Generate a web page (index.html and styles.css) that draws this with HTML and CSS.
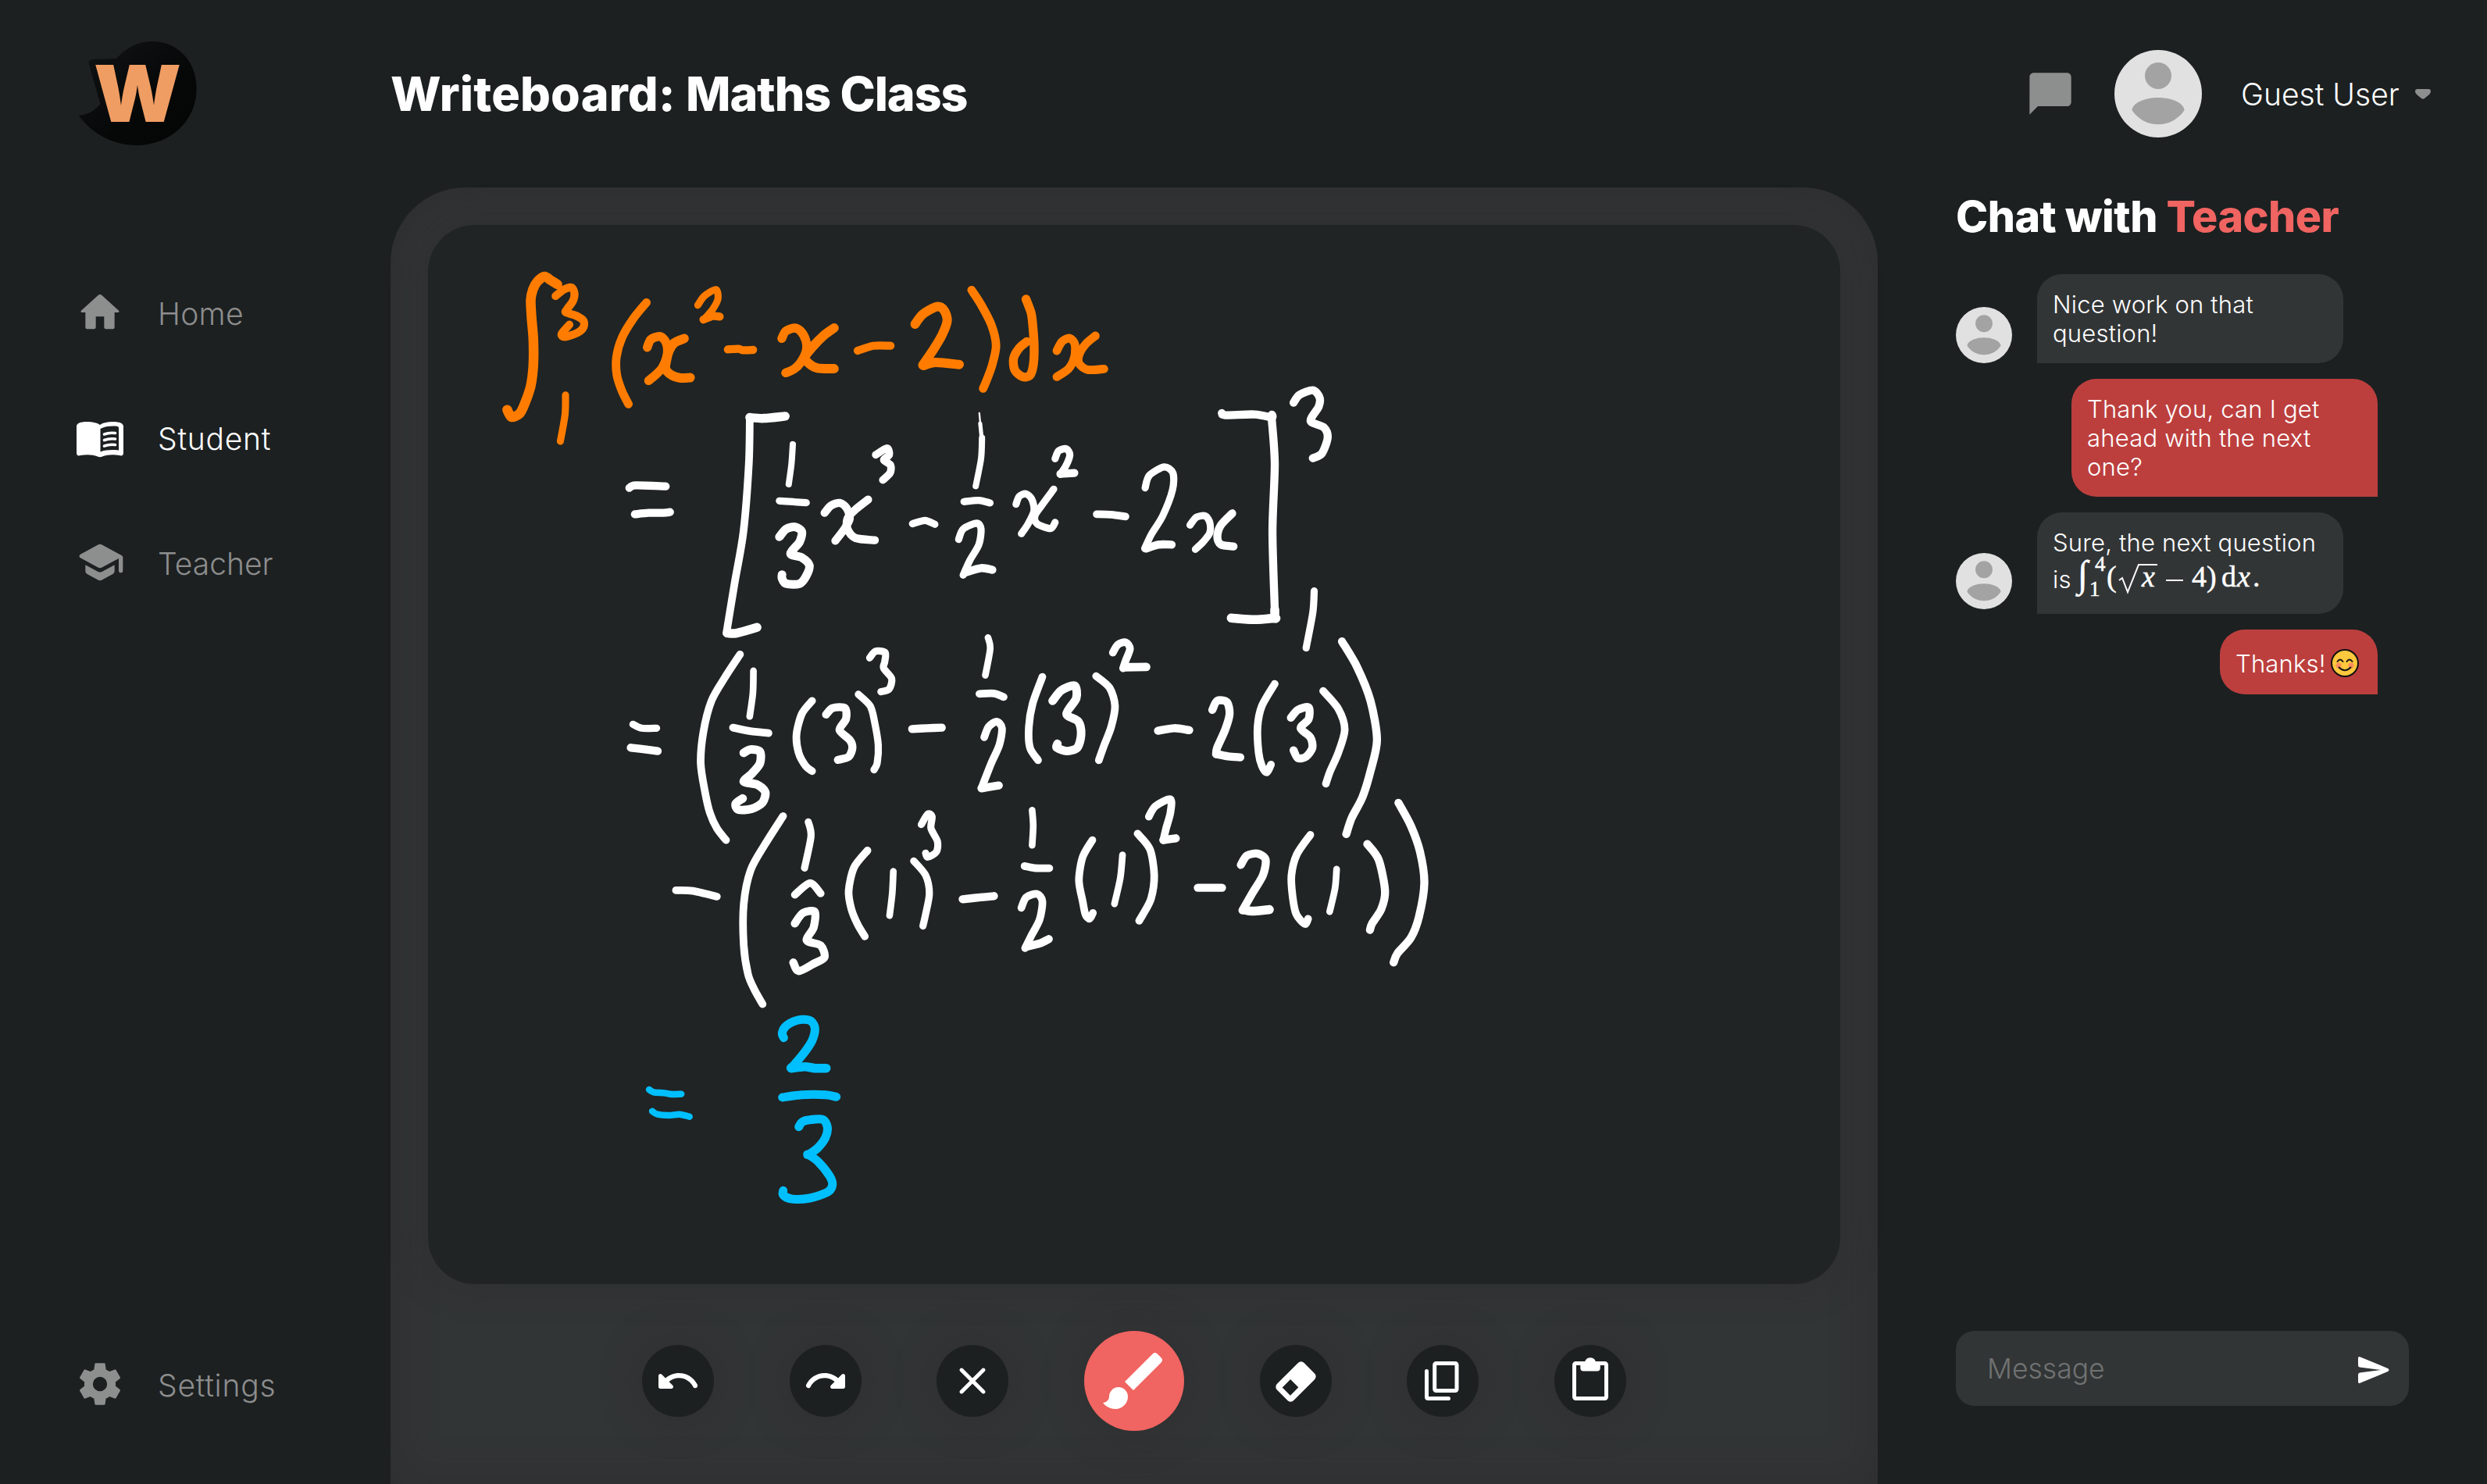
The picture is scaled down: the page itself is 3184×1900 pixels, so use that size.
FILE: index.html
```html
<!DOCTYPE html>
<html lang="en">
<head>
<meta charset="utf-8">
<title>Writeboard: Maths Class</title>
<link rel="stylesheet" href="styles.css">
</head>
<body>
<svg class="sprite" aria-hidden="true">
  <symbol id="avatar" viewBox="0 0 112 112">
    <circle cx="56" cy="56" r="56" fill="#e1e1e1"/>
    <circle cx="56" cy="33" r="17" fill="#a3a3a3"/>
    <path fill="#a3a3a3" d="M22.4 77C24 66 42 61 56 61s32 5 33.6 16a40 40 0 0 1-67.2 0z"/>
  </symbol>
</svg>
<div class="app">
  <aside class="sidebar">
    <svg class="logo" viewBox="0 0 160 140" role="img" aria-label="Writeboard">
      <defs><linearGradient id="ink" x1="0" y1="0" x2="1" y2="1"><stop offset="0" stop-color="#111415"/><stop offset=".6" stop-color="#060808"/><stop offset="1" stop-color="#040505"/></linearGradient></defs>
      <path fill="url(#ink)" d="M4.700 108C17 107 26 101 32.500 93L18 43C17 38 19 36 24 36L53 35C66 21 80 13 99 13C132 13 155.700 39 155.700 73C155.700 115 122 146 79 146C48 146 22 131 4.700 108z"/>
      <text class="logo-letter" x="24" y="116" textLength="112" lengthAdjust="spacingAndGlyphs">W</text>
    </svg>
    <nav class="nav">
      <a class="nav-item"><svg class="icon" viewBox="0 0 24 24"><path d="M10 19v-5h4v5c0 .55.45 1 1 1h3c.55 0 1-.45 1-1v-7h1.700c.46 0 .68-.57.33-.87L12.670 3.600c-.38-.34-.96-.34-1.340 0l-8.360 7.530c-.34.3-.13.87.33.87H5v7c0 .55.45 1 1 1h3c.55 0 1-.45 1-1z"/></svg><span class="home">Home</span></a>
      <a class="nav-item active"><svg class="icon" viewBox="0 0 64 64"><path fill-rule="evenodd" d="M2 18C2 14 7 12 15 12C22 12 28 13 32 16C36 13 42 12 49 12C57 12 62 14 62 18V52C62 55 60 56 57 55C49 53.500 41 54 35 56.500Q32 58 29 56.500C23 54 15 53.500 7 55C4 56 2 55 2 52zM32.500 21V50.500C39 48 47 47.500 56 48.500V20C56 18 54 17.500 49 17.500C42 17.500 37 18.500 32.500 21z"/><path class="page-lines" d="M37.500 28Q44 25.500 51.500 26.500M37.500 35.500Q44 33 51.500 34M37.500 43Q44 40.500 51.500 41.500"/></svg><span>Student</span></a>
      <a class="nav-item"><svg class="icon" viewBox="0 0 24 24"><path d="M5 13.180v2.810c0 .73.4 1.410 1.040 1.760l5 2.730c.6.33 1.320.33 1.920 0l5-2.730c.64-.35 1.040-1.030 1.040-1.760v-2.810l-6.040 3.300c-.6.33-1.320.33-1.920 0L5 13.180zm6.040-9.660l-8.430 4.600c-.69.38-.69 1.380 0 1.760l8.430 4.600c.6.33 1.320.33 1.920 0L21 10.090V16c0 .55.45 1 1 1s1-.45 1-1V9.590c0-.37-.2-.7-.52-.88l-9.520-5.190c-.6-.32-1.320-.32-1.920 0z"/></svg><span class="teacher">Teacher</span></a>
    </nav>
    <a class="nav-item settings"><svg class="icon" viewBox="0.5 0.5 23 23"><path d="M19.140 12.940c.04-.3.06-.61.06-.94 0-.32-.02-.64-.07-.94l2.030-1.580c.18-.14.23-.41.12-.61l-1.920-3.320c-.12-.22-.37-.29-.59-.22l-2.390.96c-.5-.38-1.030-.7-1.620-.94l-.36-2.540c-.04-.24-.24-.41-.48-.41h-3.840c-.24 0-.43.17-.47.41l-.36 2.540c-.59.24-1.130.57-1.620.94l-2.390-.96c-.22-.08-.47 0-.59.22L2.740 8.870c-.12.21-.08.47.12.61l2.030 1.580c-.05.3-.09.63-.09.94s.02.64.07.94l-2.030 1.580c-.18.14-.23.41-.12.61l1.920 3.320c.12.22.37.29.59.22l2.390-.96c.5.38 1.030.7 1.620.94l.36 2.540c.05.24.24.41.48.41h3.840c.24 0 .44-.17.47-.41l.36-2.540c.59-.24 1.130-.56 1.620-.94l2.390.96c.22.08.47 0 .59-.22l1.920-3.320c.12-.22.07-.47-.12-.61l-2.010-1.580zM12 15.300a3.300 3.300 0 1 1 0-6.600a3.300 3.300 0 0 1 0 6.600z"/></svg><span>Settings</span></a>
  </aside>

  <main class="main">
    <header class="title-bar"><h1><span class="app-name">Writeboard:</span> <span class="room-name">Maths Class</span></h1></header>
    <section class="panel">
      <svg class="board" id="board" viewBox="548 288 1808 1356"></svg>
      <div class="toolbar">
        <button class="tool"><svg viewBox="0 0 24 24"><path d="M12.500 8c-2.650 0-5.050.99-6.900 2.600L3.710 8.710C3.080 8.080 2 8.520 2 9.410V15c0 .55.45 1 1 1h5.590c.89 0 1.340-1.080.71-1.710l-1.910-1.910c1.390-1.160 3.160-1.880 5.120-1.880 3.160 0 5.890 1.840 7.190 4.500.27.56.91.84 1.500.64.71-.23 1.070-1.040.75-1.720C20.230 10.420 16.650 8 12.500 8z"/></svg></button>
        <button class="tool"><svg viewBox="0 0 24 24"><path d="M18.400 10.600C16.550 8.990 14.150 8 11.500 8c-4.160 0-7.740 2.420-9.440 5.930-.32.67.04 1.470.75 1.710.59.2 1.230-.08 1.500-.64 1.300-2.660 4.030-4.500 7.190-4.500 1.950 0 3.730.72 5.120 1.880l-1.910 1.910c-.63.63-.19 1.710.7 1.710H21c.55 0 1-.45 1-1V9.410c0-.89-1.080-1.340-1.710-.71l-1.890 1.900z"/></svg></button>
        <button class="tool"><svg viewBox="0 0 24 24"><path d="M18.300 5.710c-.39-.39-1.020-.39-1.410 0L12 10.590 7.110 5.700c-.39-.39-1.020-.39-1.410 0-.39.39-.39 1.020 0 1.410L10.590 12 5.700 16.890c-.39.39-.39 1.020 0 1.410.39.39 1.020.39 1.410 0L12 13.410l4.890 4.890c.39.39 1.020.39 1.410 0 .39-.39.39-1.020 0-1.410L13.410 12l4.890-4.890c.38-.38.38-1.020 0-1.400z"/></svg></button>
        <button class="tool brush"><svg viewBox="0 0 24 24"><path d="M7 14c-1.660 0-3 1.340-3 3 0 1.310-1.160 2-2 2 .92 1.220 2.490 2 4 2 2.210 0 4-1.790 4-4 0-1.660-1.340-3-3-3zm13.710-9.370l-1.340-1.340c-.39-.39-1.020-.39-1.410 0L9 12.250 11.750 15l8.960-8.960c.39-.39.39-1.020 0-1.410z"/></svg></button>
        <button class="tool"><svg viewBox="0 0 60 60"><g transform="translate(30 31) rotate(-45)"><path fill-rule="evenodd" d="M-19-15H19a5.500 5.500 0 0 1 5.500 5.500V9.500a5.500 5.500 0 0 1-5.500 5.500H-19a5.500 5.500 0 0 1-5.500-5.500V-9.500a5.500 5.500 0 0 1 5.500-5.500zM-17.500-7V7.500H-2.800V-7z"/></g></svg></button>
        <button class="tool"><svg class="outline" viewBox="0 0 60 60"><rect x="19.700" y="7.500" width="28.300" height="35" rx="2"/><path d="M9.500 17.500V50.500Q9.500 52.500 11.500 52.500H37.500"/></svg></button>
        <button class="tool"><svg class="outline" viewBox="0 0 60 60"><rect x="9.500" y="7.500" width="41" height="45" rx="2"/><path class="solid" fill-rule="evenodd" d="M17.300 5H23.200A7.300 7.300 0 0 1 36.800 5H42.700V13.500Q42.700 17.500 38.700 17.500H21.300Q17.300 17.500 17.300 13.500zM30 5a2.500 2.500 0 1 0 0 5a2.500 2.500 0 0 0 0-5z"/></svg></button>
      </div>
    </section>
  </main>

  <aside class="side">
    <div class="account">
      <svg class="chat-icon" viewBox="0 0 24 24"><path d="M20 2H4c-1.100 0-1.990.9-1.990 2L2 22l4-4h14c1.100 0 2-.9 2-2V4c0-1.100-.9-2-2-2z"/></svg>
      <svg class="avatar-large"><use href="#avatar"/></svg>
      <span class="user-name">Guest User</span>
      <svg class="caret" viewBox="0 0 20 13"><path d="M3 0H17Q20 0 20 3Q20 5 18 7L12 12Q10 13.500 8 12L2 7Q0 5 0 3Q0 0 3 0z"/></svg>
    </div>
    <h2>Chat with <em>Teacher</em></h2>
    <div class="messages">
      <div class="message"><svg class="avatar-small"><use href="#avatar"/></svg><p class="bubble">Nice work on that<br>question!</p></div>
      <div class="message own"><p class="bubble">Thank you, can I get<br>ahead with the next<br>one?</p></div>
      <div class="message"><svg class="avatar-small raised"><use href="#avatar"/></svg><div class="bubble"><p>Sure, the next question</p>
        <div class="formula-line"><span>is</span><svg class="formula" viewBox="0 0 240 53">
          <text class="integral" x="2" y="38">∫</text>
          <text class="limit" x="24" y="18">4</text><text class="limit" x="17" y="50">1</text>
          <text x="39" y="38">(</text>
          <path d="M55 30L59 27L66 45L80 10H104"/>
          <text class="var" x="84" y="38">x</text>
          <path d="M115 30H137"/>
          <text x="148" y="38">4</text><text x="167" y="38">)</text>
          <text x="186" y="38">d</text><text class="var" x="206" y="38">x</text><text x="226" y="38">.</text>
        </svg></div></div></div>
      <div class="message own"><p class="bubble thanks"><span>Thanks!</span><svg class="emoji" viewBox="0 0 36 36"><circle cx="18" cy="18" r="17" fill="#ffc83d" stroke="#111" stroke-width="2"/><circle cx="10" cy="21" r="3.500" fill="#ff8e5a"/><circle cx="26" cy="21" r="3.500" fill="#ff8e5a"/><path d="M8.500 16Q12 11 15.500 16M20.500 16Q24 11 27.500 16M10.500 23.500Q18 31 25.500 23.500" fill="none" stroke="#1b1718" stroke-width="2" stroke-linecap="round"/></svg></p></div>
    </div>
    <div class="composer"><span>Message</span><svg viewBox="0 0 40 34"><path d="M0 2Q0-1 3 .5L38 15Q41 17 38 19L3 33.500Q0 35 0 32V23Q0 21 2 20.500L29 17L2 13.500Q0 13 0 11z"/></svg></div>
  </aside>
</div>
<script src="board.js"></script>
</body>
</html>
```
FILE: styles.css
```css
* { box-sizing: border-box; margin: 0; padding: 0; }
body { background: #1c2021; color: #fff; font-family: Inter, "Noto Sans", sans-serif; font-weight: 300; }
.sprite { position: absolute; width: 0; height: 0; }
.app { display: grid; grid-template-columns: 500px 1904px 780px; height: 1900px; overflow: hidden; }

.sidebar { display: flex; flex-direction: column; padding: 40px 0 0 96px; }
.logo { width: 160px; height: 140px; overflow: visible; }
.logo-letter { font-family: Inter, sans-serif; font-weight: 900; font-size: 100px; fill: #f09d63; }
.nav { display: flex; flex-direction: column; gap: 96px; margin-top: 188px; }
.nav-item { display: flex; align-items: center; gap: 42px; height: 64px; color: #8d8d8d; font-size: 39px; letter-spacing: .75px; }
.nav-item span { padding-top: 2px; }
.nav-item .home { letter-spacing: .3px; }
.nav-item .teacher { letter-spacing: 0; }
.nav-item.active { color: #fff; }
.icon { width: 64px; height: 64px; fill: #8d8f8e; }
.active .icon { fill: #fff; }
.page-lines { fill: none; stroke: #fff; stroke-width: 3.600; stroke-linecap: round; }
.settings { margin-top: auto; margin-bottom: 96px; }

.main { display: flex; flex-direction: column; }
.title-bar { height: 240px; display: flex; align-items: center; }
h1 { height: 240px; line-height: 240px; font-size: 61px; font-weight: 800; white-space: nowrap; }
.app-name { letter-spacing: .2px; }
.room-name { letter-spacing: -1.1px; }
.panel { flex: 1; padding: 48px 48px 0; background: #323536; border-radius: 96px 96px 0 0; box-shadow: inset 0 0 56px rgba(40, 36, 36, .4); }
.board { display: block; width: 1808px; height: 1356px; background: #202424; border-radius: 60px; box-shadow: 0 0 48px rgba(40, 36, 36, .35); }
.board path { fill: none; stroke-linecap: round; stroke-linejoin: round; }
.toolbar { display: flex; align-items: center; justify-content: space-between; width: 1260px; height: 128px; margin: 60px auto 0; }
.tool { display: flex; align-items: center; justify-content: center; width: 92px; height: 92px; border: 0; border-radius: 50%; background: #1c2021; box-shadow: 0 0 48px rgba(44, 40, 40, .5); }
.tool svg { width: 60px; height: 60px; fill: #fff; overflow: visible; }
.tool.brush { width: 128px; height: 128px; background: #f06461; }
.tool.brush svg { width: 96px; height: 96px; }
.tool .outline { fill: none; stroke: #fff; stroke-width: 5; stroke-linecap: round; }
.outline .solid { fill: #fff; stroke: none; }

.side { display: flex; flex-direction: column; padding: 0 60px 100px 100px; }
.account { display: flex; align-items: center; height: 240px; margin-left: 89px; }
.chat-icon { width: 64px; height: 64px; fill: #8d8f8e; }
.avatar-large { width: 112px; height: 112px; margin-left: 50px; }
.user-name { margin-left: 50px; width: 202px; font-size: 39px; white-space: nowrap; }
.caret { width: 20px; height: 13px; margin-left: 21px; fill: #8d8f8e; }
h2 { height: 111px; line-height: 73px; font-size: 55.500px; font-weight: 800; letter-spacing: -.55px; white-space: nowrap; }
h2 em { font-style: normal; color: #f06461; }
.messages { display: flex; flex-direction: column; gap: 20px; width: 540px; font-size: 31px; line-height: 37px; letter-spacing: .2px; }
.message { display: flex; align-items: flex-end; gap: 32px; }
.message.own { justify-content: flex-end; }
.avatar-small { width: 72px; height: 72px; flex: none; }
.raised { margin-bottom: 6px; }
.bubble { width: 392px; padding: 20px; background: #323536; border-radius: 32px 32px 32px 0; white-space: nowrap; }
.own .bubble { background: #bc3f3e; border-radius: 32px 32px 0 32px; }
.formula-line { display: flex; align-items: flex-start; height: 53px; }
.formula-line span { width: 30px; line-height: 57px; }
.formula { width: 240px; height: 53px; overflow: visible; fill: #fff; stroke: #fff; stroke-width: .5; font-family: "Liberation Serif", serif; font-size: 38px; font-weight: 400; letter-spacing: 0; }
.formula path { fill: none; stroke: #fff; stroke-width: 2; }
.formula .limit { font-size: 27px; }
.formula .integral { font-size: 48px; }
.formula .var { font-style: italic; }
.bubble.thanks { display: flex; justify-content: space-between; align-items: center; width: 202px; height: 83px; }
.thanks span { padding-top: 3px; }
.emoji { width: 36px; height: 36px; margin: 3px 4px 0 0; }
.composer { display: flex; justify-content: space-between; align-items: center; width: 580px; height: 96px; margin-top: auto; padding: 0 25px 0 40px; background: #323536; border-radius: 24px; color: #707272; font-size: 35.500px; }
.composer svg { width: 40px; height: 34px; margin-top: 4px; fill: #fff; }
```
FILE: board.js
```js
// Pen strokes on the board. Each group has its own origin and scale; each
// stroke is [width, "x,y x,y ..."]. A repeated point makes a sharp corner.
const ORANGE = "#ff7c00", WHITE = "#ffffff", BLUE = "#00bfff";
const groups = [
  { color: ORANGE, pen: 1.14, x: 600, y: 320.7, sx: 0.54846, sy: 1 / 3, strokes: [
    [11, "207,130 192,115 177,100 160,120 150,150 145,190 147,260 151,340 151,440 145,520 133,580 120,625 100,640 90,612"],
    [9, "203,175 222,150 240,142 247,165 243,195 230,225 227,238 250,250 268,270 268,295 255,315 225,332 217,320 235,285"],
    [8, "226,555 225,630 214,733"],
    [9.5, "415,200 385,260 358,335 345,410 346,480 358,540 373,590"],
    [10, "417,372 425,342 445,330 458,345 464,375 462,410 452,450 435,480 420,500"],
    [10.5, "503,338 480,355 468,385 462,420 460,455 475,480 495,490 517,488"],
    [8, "535,210 550,175 577,150 582,185 570,225 548,267"],
    [9, "548,265 570,252 586,254"],
    [9, "605,380 630,378 640,383 664,382"],
    [10, "731,338 740,310 760,298 775,310 787,345 788,385 775,430 760,455 740,470"],
    [10.5, "853,298 830,325 803,370 785,410 795,435 815,452 853,454"],
    [9, "908,385 945,366 985,366"],
    [10.5, "1042,283 1060,245 1093,216 1110,230 1117,270 1105,325 1085,380 1060,440"],
    [10.5, "1062,442 1090,430 1145,438"],
    [9.5, "1174,152 1195,205 1220,285 1231,365 1222,440 1210,495 1201,530"],
    [10, "1301,187 1313,240 1317,290 1320,370 1318,440 1310,480 1293,485 1275,460 1272,415 1285,375 1303,350"],
    [9.5, "1373,385 1385,350 1403,337 1415,360 1414,410 1400,455 1373,485"],
    [9.5, "1463,328 1440,360 1425,400 1425,435 1445,458 1483,455"]
  ]},
  { color: WHITE, pen: 1.14, x: 600, y: 320.7, sx: 0.54846, sy: 1 / 3, strokes: [
    [9, "375,912 390,902 460,906"],
    [9, "388,1013 420,1008 455,1008 470,1005"]
  ]},
  { color: WHITE, pen: 1.15, x: 860, y: 480.6, sx: 0.57398, sy: 1 / 3, strokes: [
    [8.5, "174,162 172,340 160,600 140,800 122,990"],
    [10, "253,157 205,165 174,162"], [10, "124,990 145,990 190,968"],
    [7, "270,265 267,340 261,418"],
    [8, "240,482 300,489"],
    [9.5, "240,620 255,590 275,582 290,600 285,640 265,685 290,700 307,730 300,770 285,800 255,800 246,780 246,765"],
    [8.5, "455,305 480,280 485,305 473,325 488,345 487,375 471,402"],
    [9, "341,528 355,500 375,490 390,510 397,550 385,590 365,635"],
    [9, "438,477 410,515 392,550 392,590 410,625 453,633"],
    [8, "537,570 565,557 587,572"],
    [2, "686,145 690,215"], [4.5, "688,185 691,235"],
    [7, "692,240 690,320 678,425"],
    [8, "652,485 685,480 710,490"],
    [8, "640,630 650,590 680,568 690,590 685,650 665,710 650,767"],
    [9, "655,757 690,740 715,747"],
    [8, "768,495 775,465 790,455 803,475 808,520 795,570 780,608"],
    [8, "852,437 825,500 810,540 815,570 845,588 855,565"],
    [8, "855,320 863,290 880,282 888,305 880,345 867,380"],
    [9, "867,378 898,375"],
    [8.5, "948,533 980,535 1012,542"],
    [8, "1056,432 1065,385 1098,352 1118,375 1117,440 1095,540 1070,610 1055,665"],
    [9, "1058,665 1085,650 1115,650"],
    [8, "1156,575 1170,545 1190,540 1200,565 1200,605 1185,640 1168,668"],
    [9, "1250,530 1225,575 1217,620 1225,650 1253,657"],
    [9, "1227,145 1235,153 1300,150 1338,162 1338,162 1345,340 1340,600 1345,900 1345,932 1345,932 1300,938 1248,932"],
    [10, "1345,900 1345,932 1345,932 1300,938 1248,932"],
    [9, "1387,105 1400,75 1430,57 1445,85 1443,120 1425,175 1455,200 1463,240 1450,300 1430,318"],
    [8, "1433,828 1430,910 1415,1047"]
  ]},
  { color: WHITE, pen: 1.15, x: 780, y: 780.6, sx: 0.68878, sy: 1 / 3, strokes: [
    [8, "44,440 60,455 88,455"], [9, "40,530 60,535 90,543"],
    [8.5, "243,172 215,260 190,350 175,470 170,590 178,700 187,780 200,840 217,885"],
    [7.5, "268,235 267,320 261,410"],
    [8.5, "230,453 260,466 296,474"],
    [9.5, "250,550 262,537 280,545 280,590 265,630 250,660 275,672 290,700 285,740 265,765 240,768 235,745 248,725"],
    [8.5, "377,350 358,400 348,480 352,550 365,600 377,620"],
    [9, "403,403 415,378 438,378 440,420 428,462 447,500 452,530 445,565 425,577"],
    [8, "463,325 485,370 493,430 500,520 498,590 492,615"],
    [8, "484,185 495,160 513,165 512,200 510,225 525,265 520,305 505,315"],
    [9, "563,458 590,455 618,453"],
    [7.5, "704,107 708,150 699,252"],
    [8.5, "688,323 715,322 733,335"],
    [8.5, "697,490 705,450 720,430 730,455 725,520 710,590 692,685"],
    [9, "692,686 724,675"],
    [8.5, "805,258 787,360 780,450 782,530 797,578"],
    [9.5, "824,350 840,310 865,292 868,340 850,400 872,430 877,480 870,530 850,543 832,530 833,515"],
    [8.5, "905,255 930,300 940,370 933,450 920,520 910,578"],
    [8.5, "936,165 945,135 960,125 968,150 960,195 955,225"],
    [9.5, "958,221 998,220"],
    [9, "1020,465 1050,455 1078,463"],
    [9, "1121,385 1130,350 1148,355 1153,400 1145,460 1130,530 1128,555"],
    [9, "1130,555 1150,563 1173,567"],
    [8.5, "1237,285 1213,370 1205,450 1207,550 1213,600 1222,625 1230,595"],
    [9, "1267,415 1280,385 1300,375 1300,420 1285,455 1303,490 1307,530 1295,565 1280,570 1272,540"],
    [8.5, "1327,312 1355,380 1367,460 1355,550 1340,620 1332,668"],
    [9, "1362,122 1390,220 1415,350 1427,500 1415,620 1400,720 1380,800 1370,862"],

    [8.5, "124,1078 155,1080 200,1102"],
    [8.5, "323,793 290,900 263,1000 250,1130 250,1290 258,1400 270,1460 285,1515"],
    [8, "370,815 375,870 363,992"],
    [8.5, "345,1095 373,1050 393,1090"],
    [9, "345,1205 360,1165 382,1160 380,1220 367,1270 393,1290 400,1335 380,1360 352,1388 342,1355"],
    [8.5, "480,925 455,990 445,1080 450,1150 462,1210 475,1255"],
    [7.5, "528,1005 526,1090 521,1175"],
    [8, "566,965 588,1020 595,1090 588,1170 583,1215"],
    [8, "580,825 592,785 600,795 598,840 610,890 608,930 592,950 588,935"],
    [9, "657,1112 690,1105 715,1100"],
    [7.5, "786,770 788,830 786,905"],
    [8.5, "772,985 790,992 818,993"],
    [8.5, "766,1145 775,1105 795,1092 805,1120 800,1190 785,1250 773,1300"],
    [9, "775,1295 800,1282 817,1265"],
    [8.5, "898,885 880,950 873,1040 880,1120 885,1170 893,1187 899,1165"],
    [7.5, "954,942 950,1030 939,1130"],
    [8.5, "982,860 1005,920 1013,1020 1007,1110 992,1170 985,1195"],
    [8.5, "1003,795 1015,755 1043,728 1043,780 1035,840 1030,885"],
    [9, "1030,885 1053,878"],
    [9, "1094,1068 1139,1068"],
    [9, "1174,980 1185,945 1205,937 1220,960 1215,1020 1195,1090 1177,1155"],
    [10, "1180,1153 1195,1158 1227,1152"],
    [8.5, "1303,865 1278,940 1268,1020 1270,1100 1277,1170 1293,1207 1299,1187"],
    [7.5, "1352,997 1349,1070 1339,1160"],
    [9, "1409,900 1430,960 1442,1080 1435,1150 1418,1205 1414,1230"],
    [9, "1467,742 1490,830 1507,930 1515,1050 1505,1180 1490,1260 1465,1320 1458,1355"]
  ]},
  { color: BLUE, pen: 1.05, x: 780, y: 1260, sx: 1 / 3, sy: 1 / 3, strokes: [
    [8, "153,405 170,415 210,418 240,423 277,422"],
    [8, "165,488 185,500 230,504 270,500 308,509"],
    [10.5, "670,206 664,190 675,165 705,145 740,136 775,142 790,170 780,215 755,255 710,310 697,322"],
    [11, "700,323 750,317 790,323 833,323"],
    [10.5, "665,435 740,425 830,425 872,433"],
    [10.5, "728,548 740,530 765,522 820,520 838,550 830,590 800,630 765,655 765,655 800,680 845,735 857,770 840,798 770,822 700,825 668,810 668,793"]
  ]}
];

function smooth(pts) {
  let d = `M${pts[0]}`;
  for (let i = 0; i < pts.length - 1; i++) {
    const p0 = pts[i - 1] || pts[i], p1 = pts[i], p2 = pts[i + 1], p3 = pts[i + 2] || p2;
    const c1 = [p1[0] + (p2[0] - p0[0]) / 7, p1[1] + (p2[1] - p0[1]) / 7];
    const c2 = [p2[0] - (p3[0] - p1[0]) / 7, p2[1] - (p3[1] - p1[1]) / 7];
    d += `C${c1} ${c2} ${p2}`;
  }
  return d;
}

const board = document.getElementById("board");
for (const g of groups) {
  for (const [width, data] of g.strokes) {
    const pts = data.split(" ").map(p => {
      const [x, y] = p.split(",").map(Number);
      return [+(g.x + x * g.sx).toFixed(1), +(g.y + y * g.sy).toFixed(1)];
    });
    const path = document.createElementNS("http://www.w3.org/2000/svg", "path");
    path.setAttribute("d", smooth(pts));
    path.setAttribute("stroke", g.color);
    path.setAttribute("stroke-width", width * g.pen);
    board.appendChild(path);
  }
}
```
